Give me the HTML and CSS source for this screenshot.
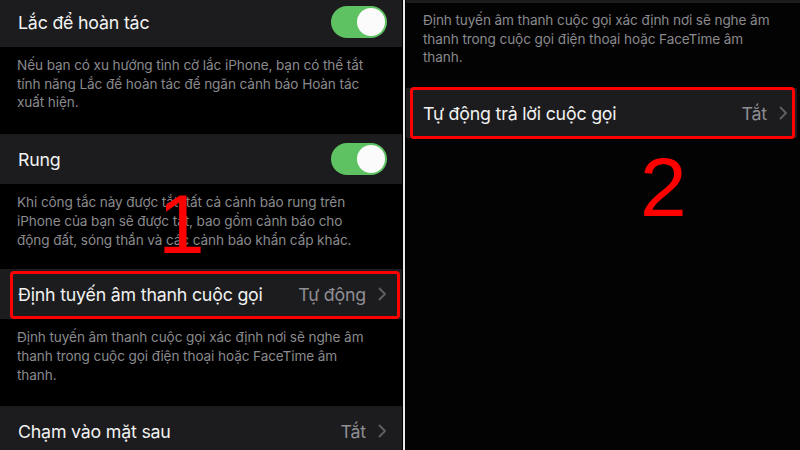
FILE: index.html
```html
<!DOCTYPE html>
<html lang="vi">
<head>
<meta charset="utf-8">
<title>Cài đặt</title>
<link rel="stylesheet" href="styles.css">
</head>
<body>
<div class="screen">
  <section class="panel panel-left">
    <div class="row row-first">
      <span class="label">Lắc để hoàn tác</span>
      <span class="toggle"><span class="knob"></span></span>
    </div>
    <p class="footer">Nếu bạn có xu hướng tình cờ lắc iPhone, bạn có thể tắt tính năng Lắc để hoàn tác để ngăn cảnh báo Hoàn tác xuất hiện.</p>
    <div class="row">
      <span class="label">Rung</span>
      <span class="toggle"><span class="knob"></span></span>
    </div>
    <div class="footer-wrap">
      <p class="footer">Khi công tắc này được tắt, tất cả cảnh báo rung trên iPhone của bạn sẽ được tắt, bao gồm cảnh báo cho động đất, sóng thần và các cảnh báo khẩn cấp khác.</p>
      <span class="step step-1">1</span>
    </div>
    <div class="row row-marked">
      <span class="label">Định tuyến âm thanh cuộc gọi</span>
      <span class="value">Tự động</span>
      <svg class="chev" viewBox="0 0 9 14" width="9" height="14"><polyline points="1.5,1.5 7,7 1.5,12.5"/></svg>
      <span class="mark mark-left"></span>
    </div>
    <p class="footer">Định tuyến âm thanh cuộc gọi xác định nơi sẽ nghe âm thanh trong cuộc gọi điện thoại hoặc FaceTime âm thanh.</p>
    <div class="row">
      <span class="label">Chạm vào mặt sau</span>
      <span class="value">Tắt</span>
      <svg class="chev" viewBox="0 0 9 14" width="9" height="14"><polyline points="1.5,1.5 7,7 1.5,12.5"/></svg>
    </div>
  </section>
  <div class="divider"></div>
  <section class="panel panel-right">
    <div class="top-edge"></div>
    <p class="footer footer-right">Định tuyến âm thanh cuộc gọi xác định nơi sẽ nghe âm thanh trong cuộc gọi điện thoại hoặc FaceTime âm thanh.</p>
    <div class="row row-right">
      <span class="label">Tự động trả lời cuộc gọi</span>
      <span class="value">Tắt</span>
      <svg class="chev" viewBox="0 0 9 14" width="9" height="14"><polyline points="1.5,1.5 7,7 1.5,12.5"/></svg>
      <span class="mark mark-right"></span>
    </div>
    <div class="step-area"><span class="step step-2">2</span></div>
  </section>
</div>
</body>
</html>
```
FILE: styles.css
```css
* { box-sizing: border-box; }
html, body { margin: 0; padding: 0; background: #000; }
body {
  width: 800px;
  height: 450px;
  overflow: hidden;
  font-family: Inter, "Noto Sans", "DejaVu Sans", sans-serif;
  color: #f2f2f2;
}
.screen {
  display: flex;
  width: 800px;
  height: 450px;
  background: #000;
}
.panel {
  overflow: hidden;
  background: #000;
}
.panel-left { width: 402px; flex: none; }
.divider {
  width: 4px;
  flex: none;
  border-left: 1px solid #000;
  border-right: 1px solid #000;
  background: #e8e8e8;
}
.panel-right { flex: 1; background: #030303; }

.row {
  position: relative;
  display: flex;
  align-items: center;
  height: 50px;
  padding: 0 15px 0 18px;
  background: #1c1c1e;
}
.row-first { margin-top: -3px; }
.label {
  flex: 1;
  font-size: 17.8px;
  letter-spacing: -0.2px;
  white-space: nowrap;
}
.value {
  font-size: 17.8px;
  color: #8e8e93;
  letter-spacing: -0.2px;
  margin-right: 12px;
}
.chev {
  fill: none;
  stroke: #5d5d62;
  stroke-width: 2;
  stroke-linecap: round;
  stroke-linejoin: round;
}
.toggle {
  display: flex;
  justify-content: flex-end;
  align-items: center;
  width: 56px;
  height: 32px;
  padding: 2px;
  border-radius: 16px;
  background: #5ec262;
}
.knob {
  width: 28px;
  height: 28px;
  border-radius: 50%;
  background: #fbfbfb;
}
.footer {
  margin: 0;
  padding: 9px 26px 22px 17px;
  font-size: 13.6px;
  line-height: 18.7px;
  color: #8a8a8e;
  letter-spacing: -0.1px;
}
.footer-wrap { position: relative; }
.footer-wrap .footer { padding-bottom: 20px; }
.step {
  position: absolute;
  color: #ff0000;
  font-family: "Liberation Sans", Arial, sans-serif;
  font-size: 84px;
  line-height: 1;
}
.step-1 { left: 158px; top: -2px; }

.mark {
  position: absolute;
  border: 3px solid #ff0000;
  border-radius: 4px;
}
.mark-left { left: 10px; right: 2px; top: 2px; bottom: 0; }

.top-edge { height: 3px; background: #1c1c1e; }
.footer-right { padding: 8px 18px 21px 17px; }
.row-right { padding-left: 17px; padding-right: 9px; margin-right: 3px; height: 50px; }
.mark-right { left: 4px; right: 2px; top: -1px; bottom: -1px; }
.step-area { position: relative; height: 120px; }
.step-2 { left: 234px; top: 7px; }
```
